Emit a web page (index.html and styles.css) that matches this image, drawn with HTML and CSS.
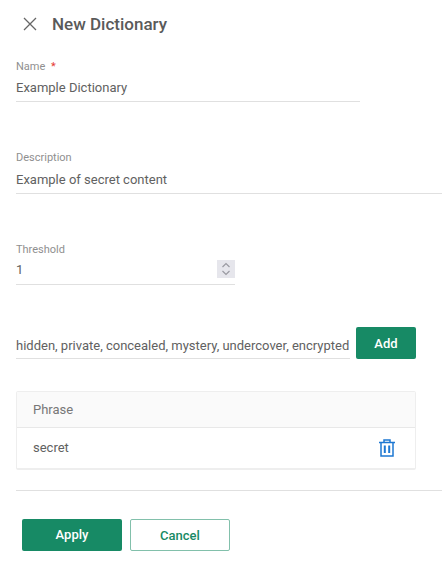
FILE: index.html
```
<!DOCTYPE html>
<html lang="en">
<head>
<meta charset="utf-8">
<title>New Dictionary</title>
<link rel="stylesheet" href="styles.css">
</head>
<body>
<header class="head">
  <svg class="close" width="14" height="14" viewBox="0 0 14 14"><path d="M1 1l12 12M13 1L1 13" stroke="#666" stroke-width="1.3" fill="none"/></svg>
  <h1 class="title">New Dictionary</h1>
</header>
<div class="field name">
  <div class="label">Name <span class="req">*</span></div>
  <div class="value">Example Dictionary</div>
</div>
<div class="field desc">
  <div class="label">Description</div>
  <div class="value">Example of secret content</div>
</div>
<div class="field thresh">
  <div class="label">Threshold</div>
  <div class="value numrow">1
    <span class="spin"><svg width="18" height="18" viewBox="0 0 18 18"><path d="M5.500 7L9 3.500 12.500 7M5.500 11L9 14.500 12.500 11" stroke="#9a9aa2" stroke-width="1.200" fill="none"/></svg></span>
  </div>
</div>
<div class="addrow">
  <div class="phrase">hidden, private, concealed, mystery, undercover, encrypted</div>
  <button class="btn solid add">Add</button>
</div>
<div class="table">
  <div class="th">Phrase</div>
  <div class="tr">
    <span class="cell">secret</span>
    <svg class="trash" width="16" height="18" viewBox="0 0 16 18"><path d="M0 3.500h16M5 3.500V1h6v2.500M2 3.500V17h12V3.500" stroke="#1e78d2" stroke-width="1.500" fill="none"/><path d="M5.800 6.500v7.500M10.200 6.500v7.500" stroke="#1e78d2" stroke-width="2" fill="none"/></svg>
  </div>
</div>
<hr class="rule">
<div class="actions">
  <button class="btn solid apply">Apply</button>
  <button class="btn ghost">Cancel</button>
</div>
</body>
</html>
```
FILE: styles.css
```
* { box-sizing: border-box; }
html, body { margin: 0; padding: 0; }
body { width: 442px; height: 568px; overflow: hidden; background: #fff; font-family: Roboto, "Liberation Sans", sans-serif; color: #616161; }
.head { display: flex; align-items: center; height: 24px; margin: 12px 0 0 23px; gap: 15px; }
.close { flex: none; }
.title { margin: 0; font-size: 17px; font-weight: 500; color: #5a5a5a; line-height: 24px; }
.field { margin-left: 16px; border-bottom: 1px solid #e0e0e0; }
.label { font-size: 11px; line-height: 13px; color: #8f8f8f; }
.req { color: #e53935; margin-left: 3px; }
.value { font-size: 13px; line-height: 18px; color: #616161; margin-top: 6px; height: 22px; }
.name { width: 344px; margin-top: 24px; }
.desc { margin-top: 49px; }
.desc .value { margin-top: 7px; }
.thresh { width: 219px; margin-top: 49px; }
.numrow { display: flex; justify-content: space-between; align-items: flex-start; margin-top: 5px; height: 23px; }
.spin { display: block; width: 18px; height: 18px; background: #e6e6ec; margin-top: -1px; }
.spin svg { display: block; }
.addrow { display: flex; align-items: flex-end; margin: 42px 0 0 16px; gap: 6px; }
.phrase { width: 334px; font-size: 13px; line-height: 18px; height: 32px; padding-top: 10px; border-bottom: 1px solid #e0e0e0; white-space: nowrap; color: #616161; }
.btn { font-family: inherit; font-size: 13px; font-weight: 500; border-radius: 2px; height: 32px; width: 100px; padding: 0; }
.solid { background: #178a65; color: #fff; border: 0; }
.add { width: 60px; }
.ghost { background: #fff; color: #178a65; border: 1px solid #82c0ab; }
.table { margin: 32px 26px 0 16px; border: 1px solid #eee; border-bottom-width: 2px; border-radius: 2px; }
.th { height: 36px; background: #fafafa; border-bottom: 1px solid #e8e8e8; font-size: 13px; line-height: 36px; padding-left: 16px; color: #777; }
.tr { height: 40px; display: flex; align-items: center; justify-content: space-between; padding: 0 20px 0 16px; font-size: 13px; color: #616161; }
.cell { margin-bottom: 2px; }
.rule { margin: 20px 0 0 16px; border: 0; border-top: 1px solid #e0e0e0; }
.actions { display: flex; gap: 8px; margin: 28px 0 0 22px; }
.apply { padding-bottom: 2px; }
```
